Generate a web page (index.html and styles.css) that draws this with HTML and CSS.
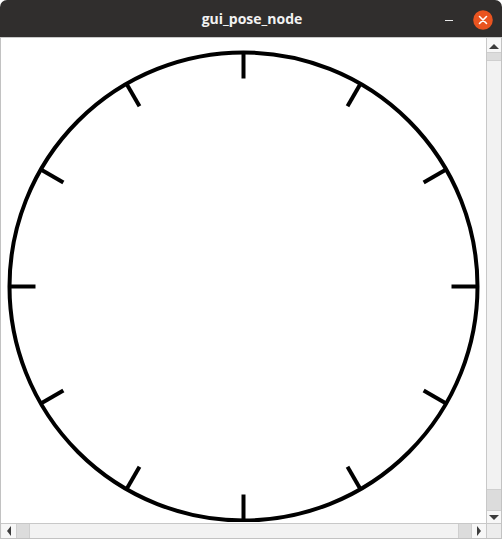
FILE: index.html
```html
<!DOCTYPE html>
<html>
<head>
<meta charset="utf-8">
<link rel="stylesheet" href="styles.css">
</head>
<body>
<div class="window">
  <div class="titlebar">
    <span class="title">gui_pose_node</span>
    <div class="controls">
      <span class="minimize"></span>
      <span class="close">
        <svg width="20" height="20" viewBox="0 0 20 20"><circle cx="10" cy="10" r="9.8" fill="#e95420"/><path d="M6.5 6.5 L13.5 13.5 M13.5 6.5 L6.5 13.5" stroke="#fff" stroke-width="1.6" stroke-linecap="round"/></svg>
      </span>
    </div>
  </div>
  <div class="client">
    <div class="canvas">
      <svg width="485" height="484" viewBox="0 0 485 484">
        <g transform="translate(242.5 248.5)" stroke="#000" stroke-width="4" fill="none">
          <circle r="234"/>
          <g id="ticks">
            <line x1="0" y1="-208" x2="0" y2="-234"/>
            <line x1="0" y1="-208" x2="0" y2="-234" transform="rotate(30)"/>
            <line x1="0" y1="-208" x2="0" y2="-234" transform="rotate(60)"/>
            <line x1="0" y1="-208" x2="0" y2="-234" transform="rotate(90)"/>
            <line x1="0" y1="-208" x2="0" y2="-234" transform="rotate(120)"/>
            <line x1="0" y1="-208" x2="0" y2="-234" transform="rotate(150)"/>
            <line x1="0" y1="-208" x2="0" y2="-234" transform="rotate(180)"/>
            <line x1="0" y1="-208" x2="0" y2="-234" transform="rotate(210)"/>
            <line x1="0" y1="-208" x2="0" y2="-234" transform="rotate(240)"/>
            <line x1="0" y1="-208" x2="0" y2="-234" transform="rotate(270)"/>
            <line x1="0" y1="-208" x2="0" y2="-234" transform="rotate(300)"/>
            <line x1="0" y1="-208" x2="0" y2="-234" transform="rotate(330)"/>
          </g>
        </g>
      </svg>
    </div>
    <div class="vscroll">
      <div class="arrow-v"><span class="tri-up"></span></div>
      <div class="trough-v top"></div>
      <div class="thumb-v"></div>
      <div class="trough-v bottom"></div>
      <div class="arrow-v"><span class="tri-down"></span></div>
    </div>
    <div class="hscroll">
      <div class="arrow-h"><span class="tri-left"></span></div>
      <div class="trough-h first"></div>
      <div class="thumb-h"></div>
      <div class="trough-h last"></div>
      <div class="arrow-h"><span class="tri-right"></span></div>
    </div>
    <div class="corner"></div>
  </div>
</div>
</body>
</html>
```

FILE: styles.css
```css
* { box-sizing: border-box; }
html, body { margin: 0; padding: 0; background: #ffffff; }
.window {
  width: 502px;
  height: 539px;
  display: flex;
  flex-direction: column;
}
.titlebar {
  height: 37px;
  flex: none;
  background: #302e2d;
  border-radius: 7px 7px 0 0;
  display: flex;
  align-items: center;
  justify-content: center;
  position: relative;
}
.title {
  font-family: "Open Sans", "DejaVu Sans", sans-serif;
  font-weight: 700;
  font-size: 14px;
  color: #f2f2f2;
  margin-left: 2px;
}
.controls {
  position: absolute;
  right: 9px;
  top: 10px;
  display: flex;
  align-items: center;
  gap: 20px;
}
.minimize {
  width: 8px;
  height: 1.5px;
  background: #e8e8e8;
  margin-top: 1px;
}
.close { display: block; width: 20px; height: 20px; }
.close svg { display: block; }
.client {
  flex: 1;
  display: grid;
  grid-template-columns: 1fr 15px;
  grid-template-rows: 1fr 15px;
  border-left: 1px solid #c2c2c2;
  border-right: 1px solid #c2c2c2;
  border-top: 1px solid #c9c9c9;
  border-bottom: 1px solid #c2c2c2;
}
.canvas {
  background: #ffffff;
  overflow: hidden;
}
.canvas svg { display: block; }
.vscroll {
  display: flex;
  flex-direction: column;
  border-left: 1px solid #c8c8c8;
  background: #f4f4f4;
  padding-top: 2px;
}
.arrow-v {
  height: 12px;
  flex: none;
  display: flex;
  align-items: center;
  justify-content: center;
  background: #f7f7f7;
}
.trough-v { background: #dcdcdc; flex: none; border-top: 1px solid #cfcfcf; border-bottom: 1px solid #cfcfcf; }
.trough-v.top { height: 9px; }
.trough-v.bottom { height: 22px; }
.thumb-v { flex: 1; background: #f2f2f2; }
.hscroll {
  display: flex;
  border-top: 1px solid #c8c8c8;
  background: #f4f4f4;
  padding-left: 1px;
}
.arrow-h {
  width: 14px;
  flex: none;
  display: flex;
  align-items: center;
  justify-content: center;
  background: #f7f7f7;
}
.trough-h { background: #dcdcdc; flex: none; width: 14px; border-left: 1px solid #cfcfcf; border-right: 1px solid #cfcfcf; }
.thumb-h { flex: 1; background: #f2f2f2; }
.corner {
  border-top: 1px solid #c8c8c8;
  border-left: 1px solid #c8c8c8;
  background: #ececec;
}
.tri-up, .tri-down, .tri-left, .tri-right { width: 0; height: 0; display: block; }
.tri-up { border-left: 5px solid transparent; border-right: 5px solid transparent; border-bottom: 5px solid #3c3c3c; }
.tri-down { border-left: 5px solid transparent; border-right: 5px solid transparent; border-top: 5px solid #3c3c3c; }
.tri-left { border-top: 5px solid transparent; border-bottom: 5px solid transparent; border-right: 4px solid #3c3c3c; }
.tri-right { border-top: 5px solid transparent; border-bottom: 5px solid transparent; border-left: 4px solid #3c3c3c; }
```
